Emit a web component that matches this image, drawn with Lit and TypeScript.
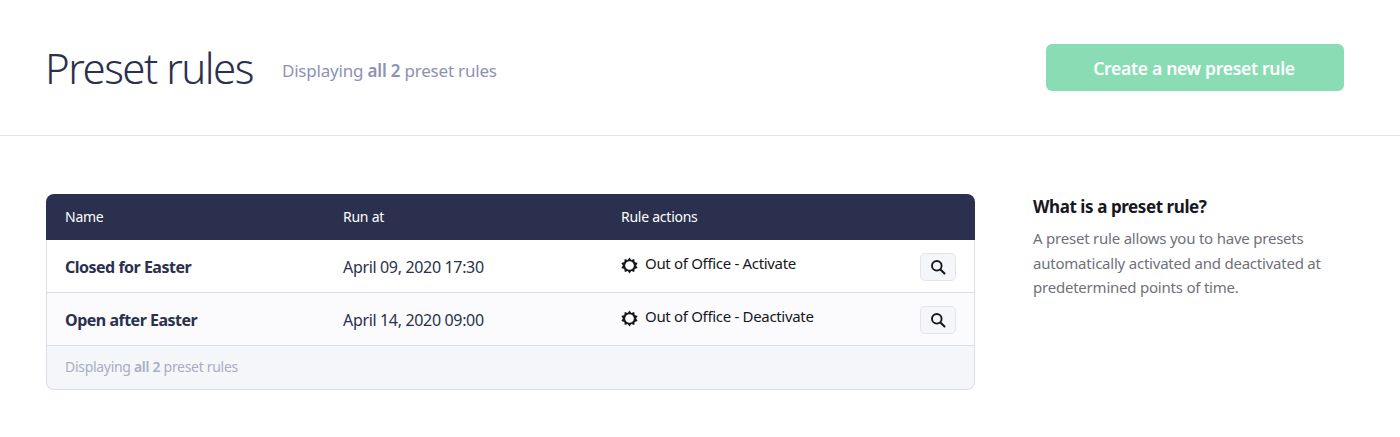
import { LitElement, html, css, svg } from "lit";
import { customElement } from "lit/decorators.js";

const gear = svg`<svg class="gear" viewBox="0 0 18 18" width="17" height="17" aria-hidden="true">
  <path d="M9 .4l1.900 2.700 3.100-1 .5 3.300 3.100 1L16 9l1.600 2.600-3.100 1-.5 3.300-3.100-1L9 17.600l-1.900-2.700-3.100 1-.5-3.300-3.100-1L2 9 .4 6.400l3.100-1 .5-3.300 3.100 1z" fill="#16181d"/>
  <circle cx="9" cy="9" r="4.600" fill="#fff"/>
</svg>`;

const search = html`<svg viewBox="0 0 16 16" width="16" height="16" aria-hidden="true">
  <circle cx="6.800" cy="6.800" r="4.800" fill="none" stroke="#16181d" stroke-width="1.900"/>
  <path d="M10.400 10.400l4.100 4.100" stroke="#16181d" stroke-width="2.100" stroke-linecap="round"/>
</svg>`;

const rows = [
  { name: "Closed for Easter", at: "April 09, 2020 17:30", action: "Out of Office - Activate" },
  { name: "Open after Easter", at: "April 14, 2020 09:00", action: "Out of Office - Deactivate" },
];

@customElement("app-root")
export class AppRoot extends LitElement {
  static styles = css`
    :host {
      display: block;
      width: 1400px;
      height: 437px;
      overflow: hidden;
      background: #fff;
      font-family: "Noto Sans", "Open Sans", sans-serif;
      color: #2a304d;
    }
    .top {
      box-sizing: border-box;
      height: 136px;
      border-bottom: 1px solid #e1e2e5;
      padding: 44px 56px 0 45px;
      display: flex;
      justify-content: space-between;
      align-items: flex-start;
    }
    .heading {
      display: flex;
      align-items: center;
      gap: 29px;
      height: 47px;
    }
    h1 {
      margin: 0;
      font-size: 42px;
      line-height: 47px;
      font-weight: 300;
      letter-spacing: -1.500px;
      color: #2a304d;
    }
    .sub {
      padding-top: 5px;
      font-size: 17px;
      letter-spacing: -0.200px;
      color: #8e92b2;
    }
    .create {
      width: 298px;
      height: 47px;
      border: 0;
      border-radius: 6px;
      background: #8adcb4;
      color: #fff;
      font: inherit;
      font-size: 17.500px;
      font-weight: 600;
      letter-spacing: -0.290px;
      padding: 0 2px 0 0;
    }
    .body {
      display: flex;
      padding: 58px 0 0 46px;
      gap: 58px;
      align-items: flex-start;
    }
    .table {
      box-sizing: border-box;
      width: 929px;
    }
    .row {
      display: grid;
      grid-template-columns: 278px 278px 1fr 36px;
      align-items: center;
      padding: 0 19px;
    }
    .head {
      box-sizing: border-box;
      height: 46px;
      padding-bottom: 2px;
      background: #2a304d;
      color: #fff;
      border-radius: 8px 8px 0 0;
      font-size: 14px;
      letter-spacing: -0.250px;
    }
    .item {
      box-sizing: border-box;
      height: 53px;
      border: solid #dcdee6;
      border-width: 0 1px 1px;
      padding: 1px 18px 0;
      font-size: 16px;
      letter-spacing: -0.340px;
    }
    .item.alt {
      background: #fbfbfd;
    }
    .name {
      font-size: 16px;
      font-weight: 700;
      letter-spacing: -0.500px;
    }
    .action {
      display: flex;
      align-items: center;
      gap: 7px;
      color: #16181d;
      font-size: 15px;
      letter-spacing: -0.320px;
      margin-top: -7px;
    }
    .gear {
      flex: none;
      margin-top: 4px;
    }
    .lens {
      box-sizing: border-box;
      width: 36px;
      height: 28px;
      border: 1px solid #e3e5eb;
      border-radius: 5px;
      background: #f5f6f9;
      padding: 0;
      display: flex;
      align-items: center;
      justify-content: center;
    }
    .foot {
      box-sizing: border-box;
      height: 44px;
      border: solid #dcdee6;
      border-width: 0 1px 1px;
      border-radius: 0 0 8px 8px;
      background: #f5f6f9;
      padding: 0 18px 2px;
      display: flex;
      align-items: center;
      color: #a9acc4;
      font-size: 14px;
      letter-spacing: -0.300px;
    }
    b.mid {
      font-weight: 600;
    }
    .aside {
      width: 310px;
    }
    h2 {
      margin: 0 0 7px;
      padding-top: 1px;
      font-size: 17px;
      line-height: 24px;
      font-weight: 700;
      letter-spacing: -0.420px;
      color: #16181d;
    }
    p {
      margin: 0;
      font-size: 15px;
      line-height: 24.500px;
      letter-spacing: -0.220px;
      color: #6f7178;
    }
  `;

  render() {
    const shown = html`Displaying <b class="mid">all 2</b> preset rules`;
    return html`
      <header class="top">
        <div class="heading">
          <h1>Preset rules</h1>
          <span class="sub">${shown}</span>
        </div>
        <button class="create">Create a new preset rule</button>
      </header>
      <main class="body">
        <section class="table">
          <div class="row head"><span>Name</span><span>Run at</span><span>Rule actions</span><span></span></div>
          ${rows.map(
            (r, i) => html`<div class="row item ${i ? "alt" : ""}">
              <span class="name">${r.name}</span>
              <span>${r.at}</span>
              <span class="action">${gear}${r.action}</span>
              <button class="lens" aria-label="View">${search}</button>
            </div>`
          )}
          <div class="foot"><span>${shown}</span></div>
        </section>
        <aside class="aside">
          <h2>What is a preset rule?</h2>
          <p>A preset rule allows you to have presets automatically activated and deactivated at predetermined points of time.</p>
        </aside>
      </main>
    `;
  }
}
